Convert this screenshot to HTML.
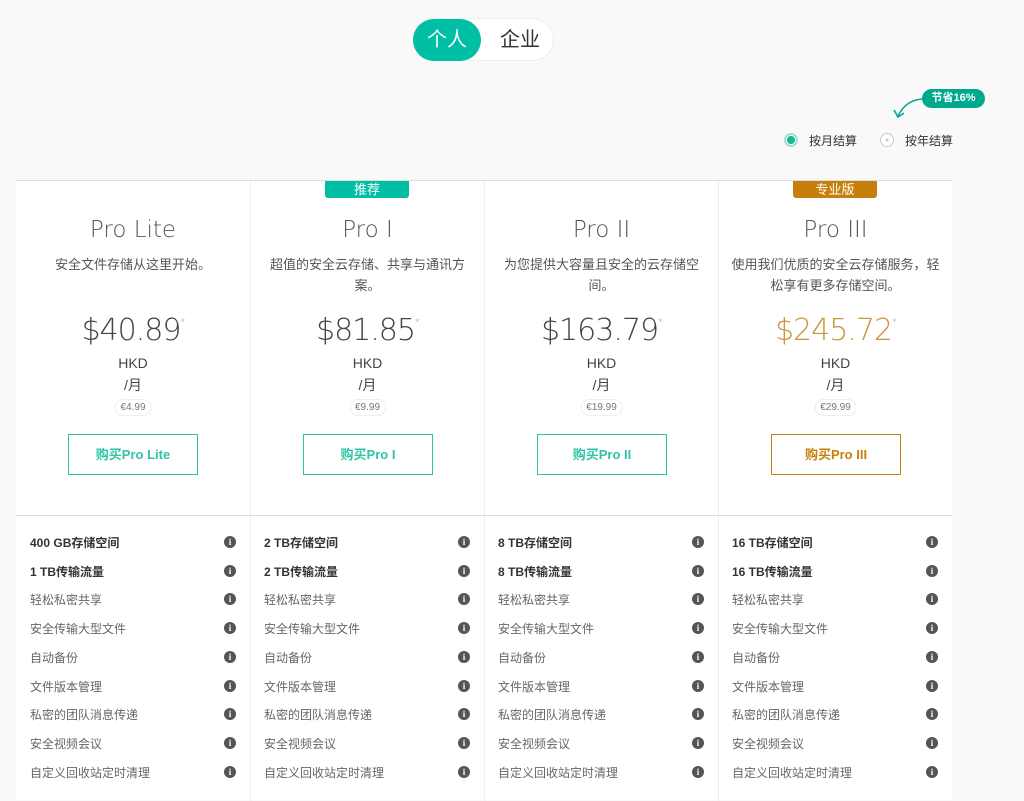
<!DOCTYPE html>
<html><head><meta charset="utf-8"><style>
*{margin:0;padding:0;box-sizing:border-box}
body{width:1024px;height:787px;overflow:hidden;background:#f9f9f9;font-family:"Liberation Sans","Noto Sans CJK SC",sans-serif;color:#333;position:relative}
.tog{position:absolute;left:412px;top:18px;width:142px;height:43px;border-radius:22px;background:#fff;border:1px solid #eee}
.tog .a{position:absolute;left:0;top:0;width:68px;height:42px;border-radius:21px;background:#00bfa5;color:#fff;font-size:20px;line-height:42px;text-align:center}
.tog .b{position:absolute;left:87px;top:0;font-size:20px;line-height:42px;color:#333}
.save{position:absolute;left:922px;top:89px;width:63px;height:19px;border-radius:10px;background:#00a88e;color:#fff;font-size:11px;font-weight:bold;line-height:19px;text-align:center}
.rad{position:absolute;top:133px;width:14px;height:14px;border-radius:50%}
.rl{position:absolute;top:132px;font-size:12px;color:#333}
.wrap{position:absolute;left:16px;top:180px;width:936px;height:620px;background:#fff;border-top:1px solid #ddd}
.col{position:absolute;top:0;width:234px;height:620px;border-left:1px solid #eee;text-align:center}
.col:first-child{border-left:none}
.badge{position:absolute;left:74px;top:0;width:84px;height:17px;line-height:17px;color:#fff;font-size:13px;border-radius:0 0 3px 3px}
.name{position:absolute;top:36px;width:100%;font-size:23px;color:#555;font-family:"DejaVu Sans","Liberation Sans",sans-serif;font-weight:300}
.desc{position:absolute;top:73px;left:10px;right:10px;font-size:13px;line-height:21px;color:#555}
.price{position:absolute;top:132px;width:100%;font-size:30px;color:#444;font-family:"DejaVu Sans","Liberation Sans",sans-serif;font-weight:300;letter-spacing:-1px}
.price sup{font-size:10px;color:#888;vertical-align:top;position:relative;top:4px}
.hkd{position:absolute;top:174px;width:100%;font-size:14px;color:#444}
.mo{position:absolute;top:194px;width:100%;font-size:14px;color:#444}
.eur{position:absolute;top:218px;left:50%;transform:translateX(-50%);font-size:10px;color:#777;border:1px solid #eee;border-radius:9px;padding:2px 5px}
.btn{position:absolute;top:253px;left:52px;width:130px;height:41px;border:1px solid #2ec4a5;color:#2ec4a5;font-size:13px;font-weight:bold;line-height:39px}
.div{position:absolute;left:0;top:334px;width:936px;border-top:1px solid #ddd}
.f{position:absolute;left:14px;right:14px;height:20px;font-size:12px;color:#666;text-align:left}
.f.b{color:#333;font-weight:bold}
.f i{position:absolute;right:0;top:2px;width:12px;height:12px;border-radius:50%;background:#555;color:#fff;font-style:normal;font-size:9px;line-height:12px;text-align:center;font-weight:bold;font-family:"Liberation Serif",serif}
</style></head><body>
<div class="tog"><div class="a">个人</div><div class="b">企业</div></div>
<div class="save">节省16%</div>
<svg style="position:absolute;left:890px;top:92px" width="34" height="30"><path d="M32 7 C22 8 14 12 8 24" stroke="#00a88e" stroke-width="1.6" fill="none"/><path d="M4 18 L8 25 L14 21" stroke="#00a88e" stroke-width="1.6" fill="none"/></svg>
<div class="rad" style="left:784px;border:2px solid #9fe3d4;background:radial-gradient(#1bb98f 55%,#fff 60%)"></div>
<div class="rl" style="left:809px">按月结算</div>
<div class="rad" style="left:880px;border:1px solid #ccc;background:radial-gradient(#ccc 15%,#fff 20%)"></div>
<div class="rl" style="left:905px">按年结算</div>
<div class="wrap">
<div class="col" style="left:0">
<div class="name">Pro Lite</div><div class="desc">安全文件存储从这里开始。</div>
<div class="price">$40.89<sup>*</sup></div><div class="hkd">HKD</div><div class="mo">/月</div><div class="eur">€4.99</div>
<div class="btn">购买Pro Lite</div></div>
<div class="col" style="left:234px"><div class="badge" style="background:#00bfa5">推荐</div>
<div class="name">Pro I</div><div class="desc">超值的安全云存储、共享与通讯方案。</div>
<div class="price">$81.85<sup>*</sup></div><div class="hkd">HKD</div><div class="mo">/月</div><div class="eur">€9.99</div>
<div class="btn">购买Pro I</div></div>
<div class="col" style="left:468px">
<div class="name">Pro II</div><div class="desc">为您提供大容量且安全的云存储空间。</div>
<div class="price">$163.79<sup>*</sup></div><div class="hkd">HKD</div><div class="mo">/月</div><div class="eur">€19.99</div>
<div class="btn">购买Pro II</div></div>
<div class="col" style="left:702px"><div class="badge" style="background:#c57f0a">专业版</div>
<div class="name">Pro III</div><div class="desc">使用我们优质的安全云存储服务，轻松享有更多存储空间。</div>
<div class="price" style="color:#c9963a">$245.72<sup>*</sup></div><div class="hkd">HKD</div><div class="mo">/月</div><div class="eur">€29.99</div>
<div class="btn" style="border-color:#c57f0a;color:#c57f0a">购买Pro III</div></div>
<div class="div"></div>
</div>
<script>
var s=[["400 GB","1 TB"],["2 TB","2 TB"],["8 TB","8 TB"],["16 TB","16 TB"]];
var f=["轻松私密共享","安全传输大型文件","自动备份","文件版本管理","私密的团队消息传递","安全视频会议","自定义回收站定时清理"];
var w=document.querySelector('.wrap'),h='';
for(var c=0;c<4;c++){var x=c*234;var items=[[s[c][0]+"存储空间",1],[s[c][1]+"传输流量",1]].concat(f.map(function(t){return[t,0]}));
items.forEach(function(it,i){h+='<div class="f'+(it[1]?' b':'')+'" style="left:'+(x+14)+'px;width:206px;top:'+(353+i*28.7)+'px">'+it[0]+'<i>i</i></div>';});}
w.insertAdjacentHTML('beforeend',h);
</script>
</body></html>
